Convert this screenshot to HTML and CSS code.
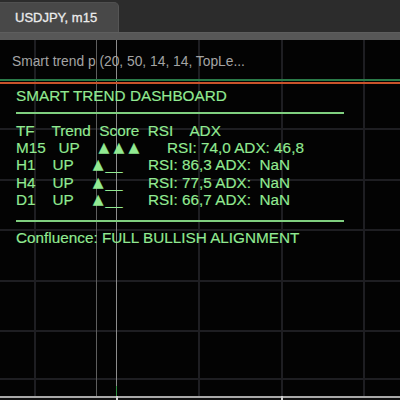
FILE: index.html
```html
<!DOCTYPE html>
<html>
<head>
<meta charset="utf-8">
<link rel="stylesheet" href="styles.css">
</head>
<body>
<div class="window">
  <div class="tabbar">
    <div class="tab">USDJPY, m15</div>
  </div>
  <div class="strip"></div>
  <div class="chart">
    <div class="grid">
      <span class="v" style="left:34px"></span>
      <span class="v" style="left:198px"></span>
      <span class="v" style="left:281px"></span>
      <span class="v" style="left:363px"></span>
      <span class="h" style="top:88px"></span>
      <span class="h" style="top:139px"></span>
      <span class="h" style="top:189px"></span>
      <span class="h" style="top:240px"></span>
      <span class="h" style="top:290px"></span>
      <span class="h" style="top:338px"></span>
      <span class="sep sep-a" style="left:96px"></span>
      <span class="sep sep-b" style="left:116px"></span>
      <span class="level level-green" style="top:39px"></span>
      <span class="level level-orange" style="top:42px"></span>
      <span class="tickmark" style="left:116px"></span>
    </div>
    <div class="label">Smart trend p (20, 50, 14, 14, TopLe...</div>
    <div class="dashboard">
      <div class="dl title">SMART TREND DASHBOARD</div>
      <div class="rule"></div>
      <div class="rows">
        <div class="dl">TF    Trend  Score  RSI    ADX</div>
        <div class="dl">M15   UP    <span class="tri">▲</span><span class="tri">▲</span><span class="tri">▲</span>      RSI: 74,0 ADX: 46,8</div>
        <div class="dl">H1    UP    <span class="tri">▲</span>__      RSI: 86,3 ADX:  NaN</div>
        <div class="dl">H4    UP    <span class="tri">▲</span>__      RSI: 77,5 ADX:  NaN</div>
        <div class="dl">D1    UP    <span class="tri">▲</span>__      RSI: 66,7 ADX:  NaN</div>
      </div>
      <div class="rule rule2"></div>
      <div class="dl confluence">Confluence: FULL BULLISH ALIGNMENT</div>
    </div>
  </div>
  <div class="xaxis">
    <span class="tick" style="left:116px"></span>
    <span class="tick" style="left:281px"></span>
  </div>
</div>
</body>
</html>
```
FILE: styles.css
```css
html, body {
  margin: 0;
  padding: 0;
  background: #2b2b2b;
}
.window {
  width: 400px;
  height: 400px;
  display: flex;
  flex-direction: column;
  overflow: hidden;
  font-family: "Liberation Sans", Arial, sans-serif;
}
.tabbar {
  height: 32px;
  padding-top: 2px;
  box-sizing: border-box;
  background: #2c2c2c;
  display: flex;
}
.tab {
  width: 119px;
  height: 30px;
  box-sizing: border-box;
  background: #484848;
  border-radius: 0 5px 0 0;
  border-right: 1px solid #555;
  border-top: 1px solid #505050;
  color: #ececec;
  font-size: 13px;
  padding-left: 15px;
  line-height: 30px;
  -webkit-text-stroke: 0.3px #ececec;
}
.strip {
  height: 8px;
  background: #575757;
  border-top: 1px solid #5e5e5e;
  box-sizing: border-box;
}
.chart {
  position: relative;
  height: 356px;
  background: #030303;
  flex: none;
}
.grid {
  position: absolute;
  inset: 0;
}
.grid .v {
  position: absolute;
  top: 0;
  bottom: 0;
  width: 2px;
  background: #1e1e22;
}
.grid .h {
  position: absolute;
  left: 0;
  right: 0;
  height: 2px;
  background: #1e1e22;
}
.grid .sep {
  position: absolute;
  top: 0;
  bottom: 0;
  width: 1px;
}
.sep-a { background: #5e5e5e; }
.sep-b { background: #8c8c8c; }
.grid .level {
  position: absolute;
  left: 0;
  right: 0;
  height: 2px;
}
.level-green { background: #2a7a48; }
.level-orange { background: #c9532a; }
.grid .tickmark {
  position: absolute;
  bottom: 0;
  height: 10px;
  width: 1px;
  background: #2f8f3f;
}
.label {
  position: absolute;
  left: 12px;
  top: 14px;
  font-size: 13.8px;
  line-height: 16px;
  color: #a4a4a4;
  white-space: pre;
}
.dashboard {
  position: absolute;
  left: 16px;
  top: 47px;
  width: 328px;
  display: flex;
  flex-direction: column;
  color: #92ea92;
  font-size: 15.3px;
  -webkit-text-stroke: 0.15px #92ea92;
}
.dl {
  line-height: 17.3px;
  height: 17.3px;
  white-space: pre;
}
.tri {
  display: inline-block;
  vertical-align: top;
  width: 15px;
  height: 17.3px;
  text-align: center;
  font-family: "DejaVu Sans", sans-serif;
  font-size: 14px;
  line-height: 17.3px;
}
.rule {
  height: 2px;
  background: #7fcf7f;
  margin-top: 8px;
  margin-bottom: 7.5px;
}
.rule2 {
  margin-top: 12px;
  margin-bottom: 6.3px;
}
.xaxis {
  position: relative;
  height: 4px;
  background: #111;
  border-top: 2px solid #a9a9a9;
  box-sizing: border-box;
}
.tick {
  position: absolute;
  top: -2px;
  width: 2px;
  height: 4px;
  background: #d0d0d0;
}
```
